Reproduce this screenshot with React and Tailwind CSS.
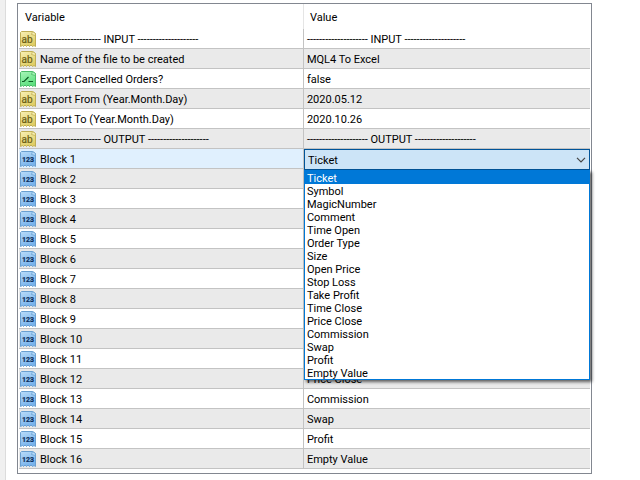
import React, { useState } from 'react';

const fields = [
  'Ticket',
  'Symbol',
  'MagicNumber',
  'Comment',
  'Time Open',
  'Order Type',
  'Size',
  'Open Price',
  'Stop Loss',
  'Take Profit',
  'Time Close',
  'Price Close',
  'Commission',
  'Swap',
  'Profit',
  'Empty Value',
];

const dashes = '-'.repeat(20);

const inputs = [
  { type: 'string', name: `${dashes} INPUT ${dashes}`, value: `${dashes} INPUT ${dashes}` },
  { type: 'string', name: 'Name of the file to be created', value: 'MQL4 To Excel' },
  { type: 'bool', name: 'Export Cancelled Orders?', value: 'false' },
  { type: 'string', name: 'Export From (Year.Month.Day)', value: '2020.05.12' },
  { type: 'string', name: 'Export To (Year.Month.Day)', value: '2020.10.26' },
  { type: 'string', name: `${dashes} OUTPUT ${dashes}`, value: `${dashes} OUTPUT ${dashes}` },
];

const iconColors = {
  string: { top: '#f8f0b4', bottom: '#e0ce66', line: '#bfae55', ink: '#6b5f16' },
  bool: { top: '#a8f5b8', bottom: '#5fe080', line: '#4cba68', ink: '#0b5a22' },
  int: { top: '#b9dcfa', bottom: '#78b3ec', line: '#6a9fd0', ink: '#0c2f5c' },
};

const TypeIcon = ({ type }) => {
  const c = iconColors[type];
  return (
    <svg viewBox="0 0 16 16" className="w-4 h-4 shrink-0" aria-hidden="true">
      <defs>
        <linearGradient id={`fill-${type}`} x1="0" y1="0" x2="0.4" y2="1">
          <stop offset="0" stopColor={c.top} />
          <stop offset="1" stopColor={c.bottom} />
        </linearGradient>
      </defs>
      <path
        d="M1.5 .5H12.5L15.5 2.5V15.5L14 14.5L12.5 15.5L11 14L9.5 15.5L8 14L6.5 15.5L5 14L3.5 15.5L2.5 14.5L.5 15.5V1.5Z"
        fill={`url(#fill-${type})`}
        stroke={c.line}
      />
      <path d="M12.5 .5L11.5 3.5L15.5 4.5V2.5Z" fill={c.top} stroke={c.line} strokeWidth="0.8" />
      {type === 'string' && (
        <text x="7" y="12" textAnchor="middle" fontSize="10" fill={c.ink} stroke={c.ink} strokeWidth="0.2">ab</text>
      )}
      {type === 'int' && (
        <text x="8" y="11" textAnchor="middle" fontSize="7" fontWeight="bold" fill={c.ink} stroke={c.ink} strokeWidth="0.2">123</text>
      )}
      {type === 'bool' && (
        <path d="M2 10.5H4L8.5 6M8.5 10.5H13" fill="none" stroke={c.ink} strokeWidth="1.2" />
      )}
    </svg>
  );
};

const FieldSelect = ({ id, value, onChange }) => {
  const [open, setOpen] = useState(true);

  const pick = (field) => {
    onChange(field);
    setOpen(false);
  };

  return (
    <div className="relative h-5">
      <select
        id={id}
        value={value}
        onChange={(e) => onChange(e.target.value)}
        onMouseDown={(e) => {
          e.preventDefault();
          setOpen(!open);
        }}
        className="block w-full h-[21px] appearance-none border border-[#005499] bg-[#cce4f7] pt-0.5 pl-[3px] pr-5 outline-none"
      >
        {fields.map((field) => (
          <option key={field} value={field}>{field}</option>
        ))}
      </select>
      <svg viewBox="0 0 10 6" className="absolute right-1 top-2 w-[10px] h-[6px] pointer-events-none" aria-hidden="true">
        <path d="M1 .8L5 4.8L9 .8" fill="none" stroke="#444" strokeWidth="1.2" />
      </svg>
      {open && (
        <ul
          role="listbox"
          aria-label="Block 1 fields"
          className="absolute inset-x-0 top-[21px] z-10 border border-[#0078d7] bg-white shadow-[2px_2px_3px_rgba(0,0,0,0.6)]"
        >
          {fields.map((field) => (
            <li
              key={field}
              role="option"
              aria-selected={field === value}
              onClick={() => pick(field)}
              className={`h-[13px] pt-px leading-[13px] px-[2px] ${field === value ? 'bg-[#0078d7] text-white' : ''}`}
            >
              {field}
            </li>
          ))}
        </ul>
      )}
    </div>
  );
};

const App = () => {
  const [firstBlock, setFirstBlock] = useState('Ticket');

  const rows = [
    ...inputs,
    ...fields.map((field, i) => ({ type: 'int', name: `Block ${i + 1}`, value: field })),
  ];

  return (
    <div className="flex min-h-screen bg-white text-black text-[11px] leading-4 font-[Roboto,Arial,sans-serif]">
      <div className="w-[6px] shrink-0 bg-[#f0f0f0] border-r border-[#dcdcdc]" />
      <main className="flex-1 pt-[3px] pl-[11px] pr-12">
        <div className="border border-[#828790] px-px pb-1">
          <table className="w-full table-fixed border-separate border-spacing-0">
            <thead>
              <tr className="h-[25px] text-left">
                <th className="w-[49.9%] font-normal p-0 pt-0.5 pl-[6px] border-r border-[#e5e5e5]">Variable</th>
                <th className="font-normal p-0 pt-0.5 pl-[6px]">Value</th>
              </tr>
            </thead>
            <tbody>
              {rows.map((row, i) => {
                const active = row.name === 'Block 1';
                return (
                  <tr key={row.name} className={`h-5 ${active ? 'bg-[#e0f0fe]' : i % 2 ? 'bg-[#eaeaea]' : 'bg-white'}`}>
                    <td className="p-0 pl-px border-r border-b border-[#c3c3c3]">
                      <div className="flex items-center gap-1 h-[19px] whitespace-nowrap">
                        <TypeIcon type={row.type} />
                        {active ? (
                          <label htmlFor="block-1" className="pt-0.5">{row.name}</label>
                        ) : (
                          <span className="pt-0.5">{row.name}</span>
                        )}
                      </div>
                    </td>
                    {active ? (
                      <td className="p-0">
                        <FieldSelect id="block-1" value={firstBlock} onChange={setFirstBlock} />
                      </td>
                    ) : (
                      <td className="p-0 pt-0.5 pl-[3px] border-b border-[#c3c3c3] whitespace-nowrap">{row.value}</td>
                    )}
                  </tr>
                );
              })}
            </tbody>
          </table>
        </div>
      </main>
    </div>
  );
};

export default App;
